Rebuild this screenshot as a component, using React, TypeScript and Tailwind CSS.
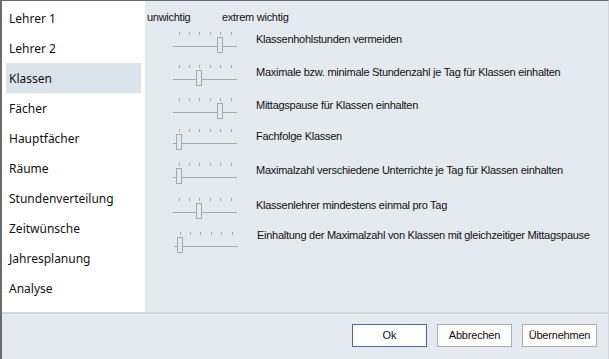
import React from "react";

const navItems = [
  "Lehrer 1",
  "Lehrer 2",
  "Klassen",
  "Fächer",
  "Hauptfächer",
  "Räume",
  "Stundenverteilung",
  "Zeitwünsche",
  "Jahresplanung",
  "Analyse",
];

const rows = [
  { label: "Klassenhohlstunden vermeiden", value: 4, h: 33, lx: 0, ly: 0, sx: 0 },
  { label: "Maximale bzw. minimale Stundenzahl je Tag für Klassen einhalten", value: 2, h: 33, lx: 0, ly: 0, sx: 0 },
  { label: "Mittagspause für Klassen einhalten", value: 4, h: 31, lx: 0, ly: 0, sx: 0 },
  { label: "Fachfolge Klassen", value: 0, h: 34, lx: 0, ly: 0, sx: 0 },
  { label: "Maximalzahl verschiedene Unterrichte je Tag für Klassen einhalten", value: 0, h: 35, lx: 0, ly: 0, sx: 0 },
  { label: "Klassenlehrer mindestens einmal pro Tag", value: 2, h: 34, lx: 0, ly: 0, sx: 0 },
  { label: "Einhaltung der Maximalzahl von Klassen mit gleichzeitiger Mittagspause", value: 0, h: 30, lx: 1, ly: -4, sx: 1 },
];

function Slider({ value }: { value: number }) {
  const ticks = [0, 1, 2, 3, 4, 5];
  const tx = (i: number) => 5.5 + i * 10.4;
  const cx = Math.round(tx(value));
  return (
    <svg width="64" height="22" viewBox="0 0 64 22" className="block shrink-0">
      {ticks.map((i) => (
        <line
          key={i}
          x1={Math.round(tx(i)) + 0.5}
          x2={Math.round(tx(i)) + 0.5}
          y1={0}
          y2={3}
          stroke="#a9a9a9"
          strokeWidth="1"
        />
      ))}
      <line x1="0" x2="64" y1="14.5" y2="14.5" stroke="#a9a9a9" strokeWidth="1" />
      <rect x={cx - 2.5} y={5.5} width={5} height={15} fill="#e5e9f0" stroke="#a9a9a9" strokeWidth="1" />
    </svg>
  );
}

export default function App() {
  return (
    <div className="w-[609px] h-[359px] bg-[#e5e9f0] border-l-2 border-l-[#6b6b6b] border-t border-t-[#6b6b6b] border-r border-r-[#d3d6db] flex flex-col overflow-hidden">
      <div className="flex h-[311px] shrink-0">
        <nav
          className="w-[143px] bg-white pt-[2px] flex flex-col"
          style={{ fontFamily: '"Noto Sans", "Open Sans", sans-serif' }}
        >
          {navItems.map((item) => (
            <div
              key={item}
              className={`mx-[4px] h-[30px] flex items-center pl-[3px] pt-[1px] text-[12px] text-[#111] ${
                item === "Klassen" ? "bg-[#dbe3eb]" : ""
              }`}
            >
              {item}
            </div>
          ))}
        </nav>
        <div
          className="flex-1 flex flex-col pt-[9px] text-[11px] tracking-[-0.27px] text-[#111]"
          style={{ fontFamily: '"Liberation Sans", Arial, sans-serif' }}
        >
          <div className="flex h-[14px] leading-[14px] pl-[2px]">
            <span className="w-[75px]">unwichtig</span>
            <span>extrem wichtig</span>
          </div>
          <div className="flex flex-col mt-[8px]">
            {rows.map((r) => (
              <div key={r.label} className="flex items-start" style={{ height: r.h }}>
                <div style={{ marginLeft: 28 + r.sx }}>
                  <Slider value={r.value} />
                </div>
                <span
                  className="leading-[14px] whitespace-nowrap"
                  style={{ marginLeft: 19 + r.lx - r.sx, marginTop: r.ly }}
                >
                  {r.label}
                </span>
              </div>
            ))}
          </div>
        </div>
      </div>
      <div className="h-[2px] bg-[#d3d6dc] shrink-0" />
      <div
        className="flex-1 flex justify-end items-start pt-[10px] pr-[11px] gap-[10px] text-[11px] text-[#111]"
        style={{ fontFamily: '"Liberation Sans", Arial, sans-serif' }}
      >
        <button className="w-[75px] h-[23px] bg-white border border-[#4a6b97] flex items-center justify-center">
          Ok
        </button>
        <button className="w-[75px] h-[23px] bg-[#fdfdfd] border border-[#adadad] flex items-center justify-center tracking-[-0.2px]">
          Abbrechen
        </button>
        <button className="w-[75px] h-[23px] bg-[#fdfdfd] border border-[#adadad] flex items-center justify-center tracking-[-0.2px]">
          Übernehmen
        </button>
      </div>
    </div>
  );
}
